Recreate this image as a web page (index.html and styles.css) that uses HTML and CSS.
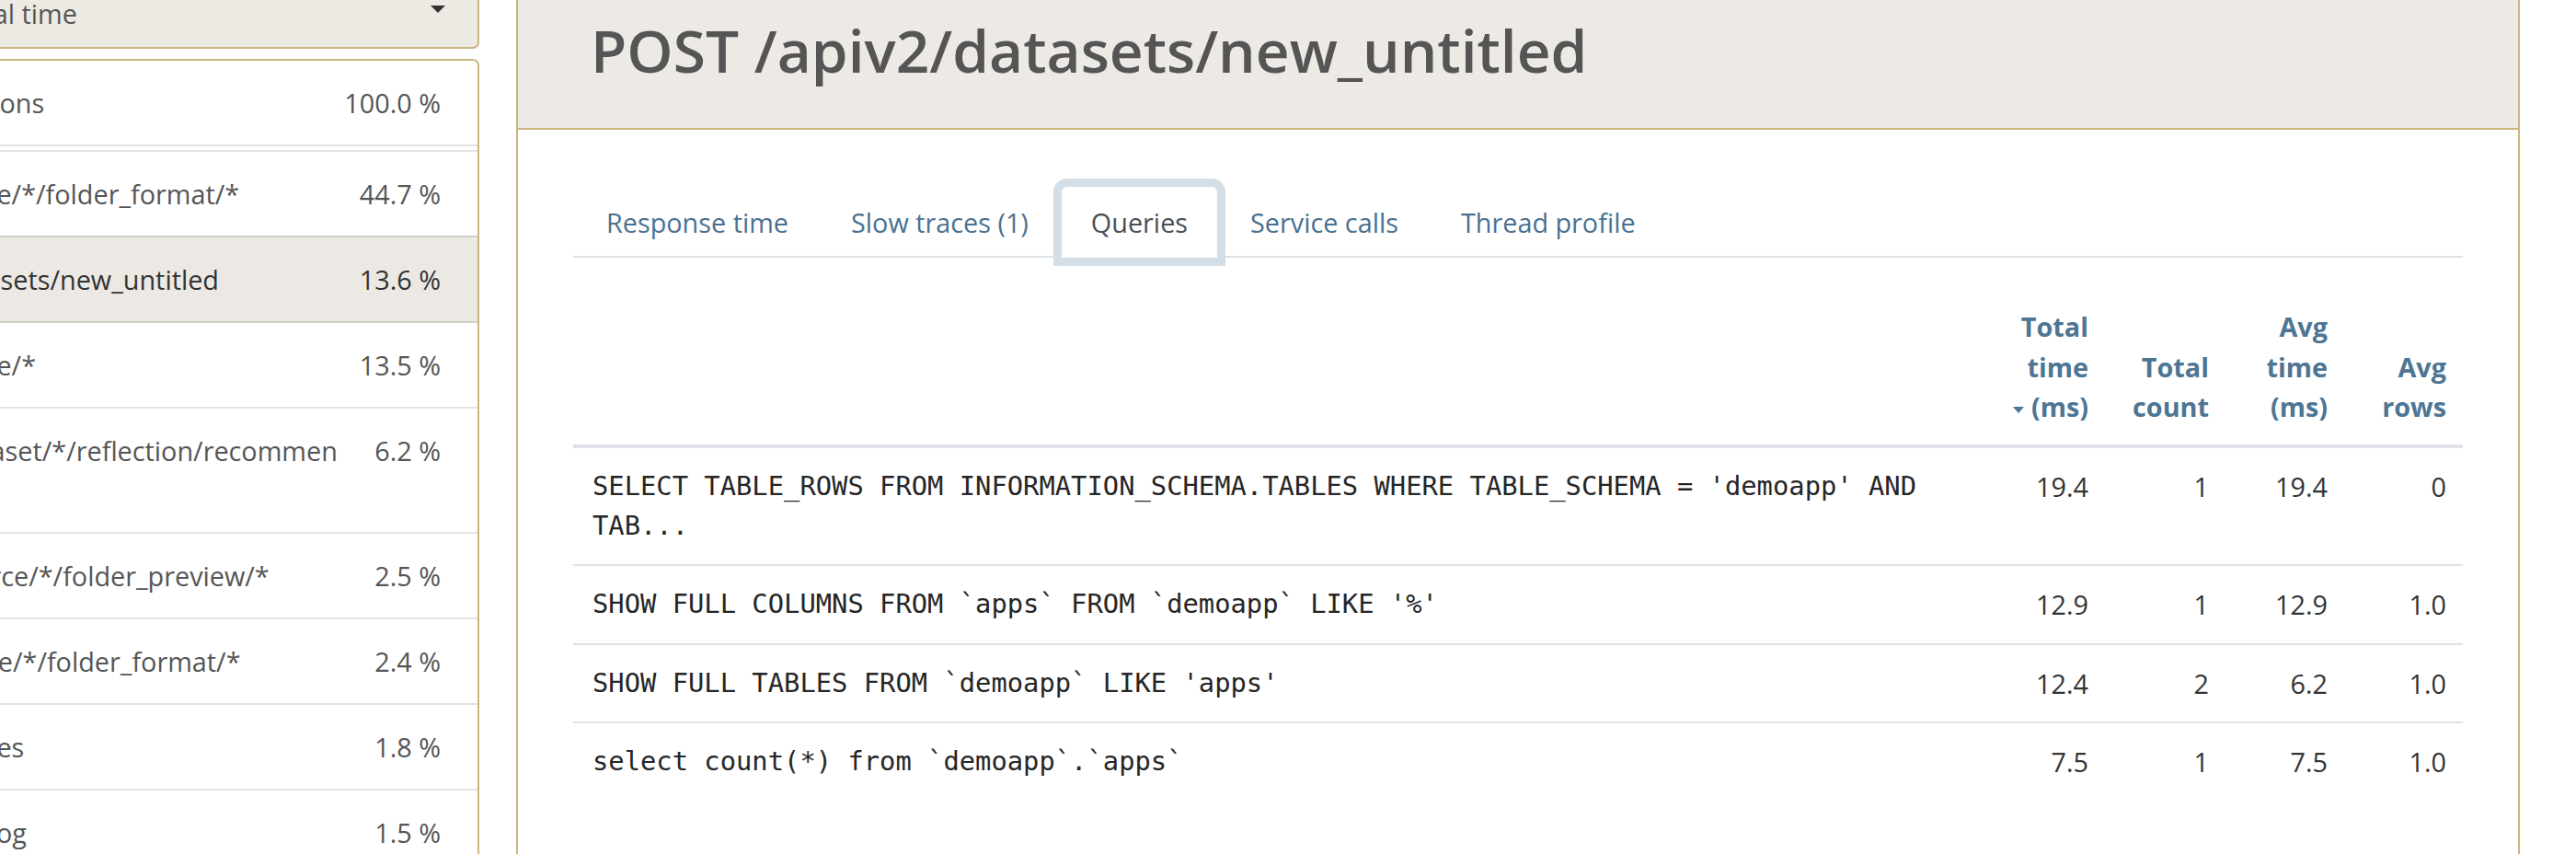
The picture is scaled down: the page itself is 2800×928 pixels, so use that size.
FILE: index.html
```html
<!DOCTYPE html>
<html lang="en">
<head>
<meta charset="utf-8">
<title>POST /apiv2/datasets/new_untitled</title>
<link rel="stylesheet" href="styles.css">
</head>
<body>
<div class="page">
  <aside class="sidebar">
    <div class="select">
      <span class="select-text">By percent of total time</span>
      <span class="caret"></span>
    </div>
    <div class="tx-list">
      <div class="tx-item tx-overall"><span class="tx-name">All Web Transactions</span><span class="tx-pct">100.0 %</span></div>
      <div class="tx-group">
        <div class="tx-item"><span class="tx-name">GET /apiv2/source/*/folder_format/*</span><span class="tx-pct">44.7 %</span></div>
        <div class="tx-item active"><span class="tx-name">POST /apiv2/datasets/new_untitled</span><span class="tx-pct">13.6 %</span></div>
        <div class="tx-item"><span class="tx-name">GET /apiv2/source/*</span><span class="tx-pct">13.5 %</span></div>
        <div class="tx-item"><span class="tx-name">HEAD /apiv2/dataset/*/reflection/recommendations</span><span class="tx-pct">6.2 %</span></div>
        <div class="tx-item"><span class="tx-name">POST /apiv2/source/*/folder_preview/*</span><span class="tx-pct">2.5 %</span></div>
        <div class="tx-item"><span class="tx-name">PUT /apiv2/source/*/folder_format/*</span><span class="tx-pct">2.4 %</span></div>
        <div class="tx-item"><span class="tx-name">GET /apiv2/sources</span><span class="tx-pct">1.8 %</span></div>
        <div class="tx-item"><span class="tx-name">GET /apiv2/jobs/log</span><span class="tx-pct">1.5 %</span></div>
        <div class="tx-item"><span class="tx-name">GET /apiv2/space/*</span><span class="tx-pct">1.2 %</span></div>
      </div>
    </div>
  </aside>
  <main class="panel">
    <header class="panel-header">
      <h1 class="title">POST /apiv2/datasets/new_untitled</h1>
    </header>
    <div class="panel-body">
      <ul class="tabs">
        <li class="tab">Response time</li>
        <li class="tab">Slow traces (1)</li>
        <li class="tab active">Queries</li>
        <li class="tab">Service calls</li>
        <li class="tab">Thread profile</li>
      </ul>
      <table class="queries">
        <colgroup>
          <col>
          <col class="col-n1">
          <col class="col-n2">
          <col class="col-n3">
          <col class="col-n4">
        </colgroup>
        <thead>
          <tr>
            <th class="th-query"></th>
            <th class="num">Total time <span class="sorted"><span class="sort-caret"></span>(ms)</span></th>
            <th class="num">Total count</th>
            <th class="num">Avg time (ms)</th>
            <th class="num">Avg rows</th>
          </tr>
        </thead>
        <tbody>
          <tr>
            <td class="sql">SELECT TABLE_ROWS FROM INFORMATION_SCHEMA.TABLES WHERE TABLE_SCHEMA = 'demoapp' AND TAB...</td>
            <td class="num">19.4</td>
            <td class="num">1</td>
            <td class="num">19.4</td>
            <td class="num">0</td>
          </tr>
          <tr>
            <td class="sql">SHOW FULL COLUMNS FROM `apps` FROM `demoapp` LIKE '%'</td>
            <td class="num">12.9</td>
            <td class="num">1</td>
            <td class="num">12.9</td>
            <td class="num">1.0</td>
          </tr>
          <tr>
            <td class="sql">SHOW FULL TABLES FROM `demoapp` LIKE 'apps'</td>
            <td class="num">12.4</td>
            <td class="num">2</td>
            <td class="num">6.2</td>
            <td class="num">1.0</td>
          </tr>
          <tr>
            <td class="sql">select count(*) from `demoapp`.`apps`</td>
            <td class="num">7.5</td>
            <td class="num">1</td>
            <td class="num">7.5</td>
            <td class="num">1.0</td>
          </tr>
        </tbody>
      </table>
    </div>
  </main>
</div>
</body>
</html>
```

FILE: styles.css
```css
html, body {
  margin: 0;
  padding: 0;
  overflow: hidden;
  background: #ffffff;
}

body {
  font-family: "Open Sans", "Liberation Sans", sans-serif;
  font-size: 28.8px;
  color: #333333;
}

.page {
  display: flex;
  align-items: flex-start;
  gap: 40px;
  margin-top: -23px;
  margin-left: -269px;
}

/* ---------- sidebar ---------- */
.sidebar {
  flex: none;
  width: 790px;
}

.select {
  box-sizing: border-box;
  height: 76px;
  display: flex;
  align-items: center;
  padding: 0 35px 0 36px;
  background: #edeae4;
  border: 2px solid #c9b77f;
  border-radius: 7px;
  color: #555555;
  line-height: 42px;
}

.select-text {
  flex: 1;
  white-space: nowrap;
}

.caret {
  flex: none;
  width: 0;
  height: 0;
  border-left: 8px solid transparent;
  border-right: 8px solid transparent;
  border-top: 8px solid #333333;
  margin-bottom: 10px;
}

.tx-list {
  margin-top: 11px;
  background: #ffffff;
  border: 2px solid #c9b77f;
  border-radius: 7px;
}

.tx-item {
  display: flex;
  align-items: flex-start;
  padding: 24px 40px 24px 36px;
  line-height: 43px;
  color: #555555;
}

.tx-overall {
  border-bottom: 2px solid #e2e2e2;
}

.tx-group {
  margin-top: 4px;
}

.tx-group .tx-item {
  border-top: 2px solid #e2e2e2;
}

.tx-group .tx-item.active {
  background: #ece9e4;
  border-top-color: #d2cec8;
  color: #333333;
}

.tx-group .tx-item.active + .tx-item {
  border-top-color: #d2cec8;
}

.tx-name {
  flex: 1;
  min-width: 0;
  word-break: break-all;
}

.tx-pct {
  flex: none;
  width: 105px;
  text-align: right;
  white-space: nowrap;
}

/* ---------- main panel ---------- */
.panel {
  flex: none;
  box-sizing: border-box;
  width: 2178px;
  min-height: 1100px;
  border: 2px solid #c9b77f;
  border-radius: 7px;
  background: #ffffff;
}

.panel-header {
  background: #ede9e4;
  border-bottom: 2px solid #c9b77f;
  border-radius: 5px 5px 0 0;
  padding: 40px 60px 49px 79px;
}

.title {
  margin: 0;
  font-size: 64px;
  font-weight: 600;
  line-height: 71.3px;
  color: #555555;
}

.panel-body {
  padding: 62px 60px 60px 60px;
}

.tabs {
  list-style: none;
  margin: 0;
  padding: 0 0 0 4px;
  display: flex;
  gap: 4px;
  border-bottom: 2px solid #dee2e6;
}

.tab {
  padding: 18px 32px;
  line-height: 41px;
  margin-bottom: -2px;
  color: #4a7191;
  border-radius: 6px 6px 0 0;
}

.tab.active {
  background: #ffffff;
  color: #495057;
  box-shadow: 0 0 0 9px #d3dee7;
}

/* ---------- queries table ---------- */
.queries {
  margin-top: 33px;
  width: 100%;
  border-collapse: collapse;
  table-layout: fixed;
}

.col-n1 { width: 131px; }
.col-n2 { width: 131px; }
.col-n3 { width: 129px; }
.col-n4 { width: 129px; }

.queries th,
.queries td {
  padding: 20px 18px;
  line-height: 43.2px;
}

.queries th {
  font-weight: 700;
  color: #4d7594;
  vertical-align: bottom;
  border-bottom: 4px solid #dee2e6;
}

.queries td {
  vertical-align: top;
  border-top: 2px solid #dee2e6;
  color: #333333;
}

.queries .num {
  text-align: right;
}

.queries td.sql {
  padding-left: 21px;
  font-family: "DejaVu Sans Mono", "Liberation Mono", monospace;
  font-size: 28.8px;
  color: #262626;
}

.sorted {
  white-space: nowrap;
}

.sort-caret {
  display: inline-block;
  width: 0;
  height: 0;
  border-left: 6.5px solid transparent;
  border-right: 6.5px solid transparent;
  border-top: 7px solid #4d7594;
  vertical-align: middle;
  margin-right: 8px;
}
```
